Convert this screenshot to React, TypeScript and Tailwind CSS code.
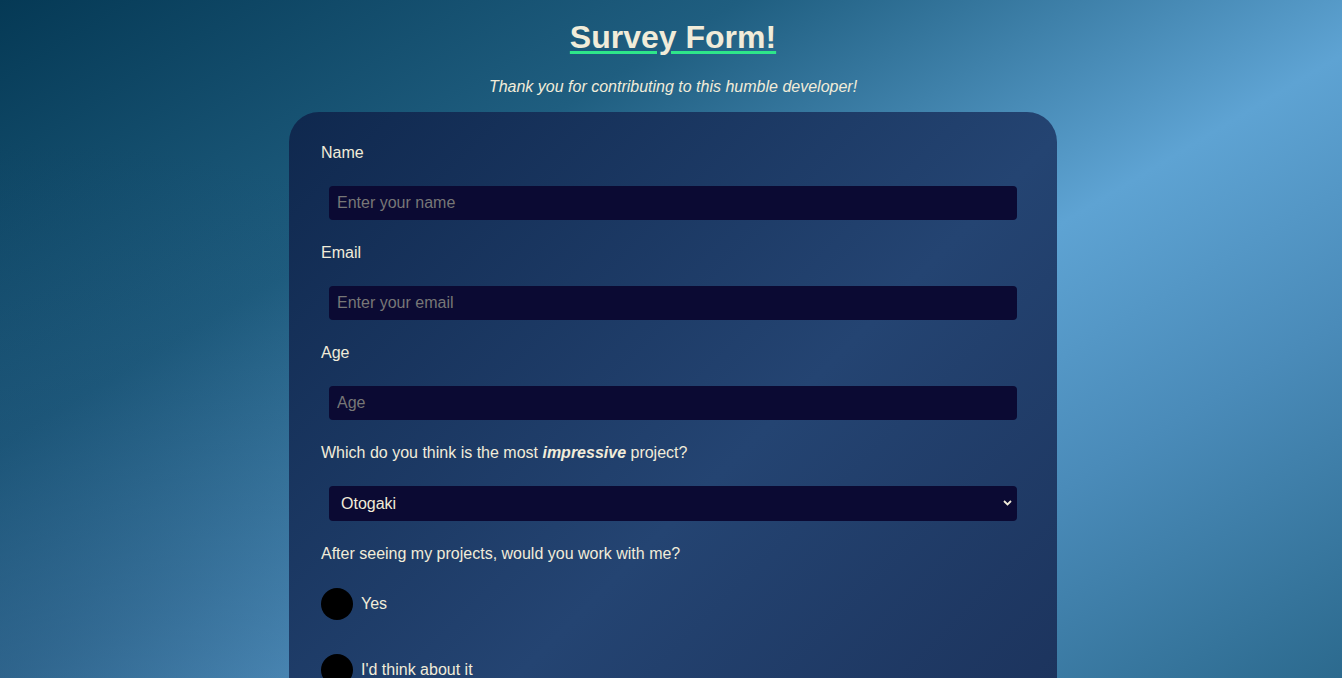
import React, { useState } from 'react';

const fieldInput =
  'block mx-2 mt-[24px] mb-[23px] h-[34px] w-[calc(100%-16px)] rounded-[4px] bg-[#0b0a33] px-2 text-[16px] text-[#f1ecd9] placeholder:text-[#777777] outline-none';
const fieldLabel = 'block leading-[19px]';

function App() {
  const [project, setProject] = useState('Otogaki');
  const [answer, setAnswer] = useState('');

  const options = ['Yes', "I'd think about it", 'No'];

  return (
    <div className="min-h-screen w-full bg-fixed bg-[radial-gradient(ellipse_60%_80%_at_0%_100%,rgba(22,60,98,0.45),transparent),linear-gradient(149deg,#053955_0%,#1f5e80_30%,#5ea3d3_58%,#4a8bb9_76%,#2c6a8e_100%)] pl-1 font-['Liberation_Sans',Arial,sans-serif] text-[#f1ecd9]">
      <div className="flex flex-col items-center pt-[19px]">
        <h1 className="text-[32px] font-bold leading-[37px] underline decoration-[#2ee68a] decoration-[3px] underline-offset-[3px]">
          Survey Form!
        </h1>
        <p className="mt-[22px] text-[16px] italic leading-[18px]">
          Thank you for contributing to this humble developer!
        </p>
      </div>

      <form
        className="mx-auto mt-[16px] w-[768px] rounded-[30px] bg-[linear-gradient(135deg,#0f284e_0%,#244472_55%,#1b315a_100%)] px-8 pt-[31px] pb-8 text-[16px]"
        onSubmit={(e) => e.preventDefault()}
      >
        <label htmlFor="name" className={fieldLabel}>Name</label>
        <input id="name" type="text" placeholder="Enter your name" className={fieldInput} />

        <label htmlFor="email" className={fieldLabel}>Email</label>
        <input id="email" type="email" placeholder="Enter your email" className={fieldInput} />

        <label htmlFor="age" className={fieldLabel}>Age</label>
        <input id="age" type="number" placeholder="Age" className={fieldInput} />

        <label htmlFor="project" className={fieldLabel}>
          Which do you think is the most <b><i>impressive</i></b> project?
        </label>
        <div className="relative mx-2 mt-[24px] mb-[23px]">
          <select
            id="project"
            value={project}
            onChange={(e) => setProject(e.target.value)}
            className="block h-[35px] w-full appearance-none rounded-[4px] bg-[#0b0a33] pl-3 text-[16px] text-[#f1ecd9] outline-none"
          >
            <option>Otogaki</option>
            <option>Portfolio</option>
            <option>Survey Form</option>
          </select>
          <svg
            className="pointer-events-none absolute right-[5px] top-[14px]"
            width="9"
            height="6"
            viewBox="0 0 9 6"
          >
            <path d="M1 1l3.5 3.5L8 1" fill="none" stroke="#f1ecd9" strokeWidth="1.8" />
          </svg>
        </div>

        <p className={fieldLabel}>After seeing my projects, would you work with me?</p>
        <div className="mt-[25px] flex flex-col gap-[34px]">
          {options.map((opt) => (
            <label key={opt} className="flex items-center gap-2 leading-[18px]">
              <input
                type="radio"
                name="work"
                checked={answer === opt}
                onChange={() => setAnswer(opt)}
                className="h-8 w-8 appearance-none rounded-full bg-black"
              />
              {opt}
            </label>
          ))}
        </div>
      </form>
    </div>
  );
}

export default App;
